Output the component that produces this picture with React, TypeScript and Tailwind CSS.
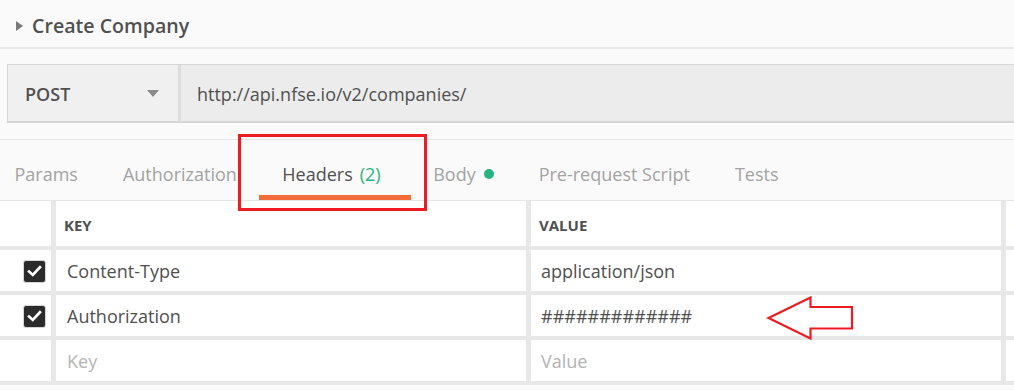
const tabs = [
  { key: "params", label: "Params" },
  { key: "auth", label: "Authorization" },
  { key: "headers", label: "Headers", count: 2 },
  { key: "body", label: "Body", dot: true },
  { key: "pre", label: "Pre-request Script" },
  { key: "tests", label: "Tests" },
];

const rows = [
  { key: "Content-Type", value: "application/json", checked: true },
  { key: "Authorization", value: "#############", checked: true },
  { key: "Key", value: "Value", placeholder: true },
];

function Checkbox() {
  return (
    <div className="flex h-[23px] w-[23px] items-center justify-center rounded-[3px] border border-[#d6d6d6] bg-[#2b2b2b]">
      <svg width="15" height="12" viewBox="0 0 15 12" fill="none">
        <path
          d="M2 6.5 L5.8 10 L13 2.2"
          stroke="white"
          strokeWidth="2.6"
          strokeLinecap="square"
        />
      </svg>
    </div>
  );
}

export default function App() {
  return (
    <div
      className="relative h-[390px] w-[1014px] overflow-hidden bg-[#fafafa] text-[#505050]"
      style={{ fontFamily: '"Open Sans", "Liberation Sans", sans-serif' }}
    >
      {/* title */}
      <div className="flex h-[49px] items-center gap-[9px] border-b-2 border-[#e8e8e8] pt-[5px] pl-[16px]">
        <svg width="7" height="10" viewBox="0 0 7 10">
          <path d="M0 0 L7 5 L0 10 Z" fill="#7a7a7a" />
        </svg>
        <span className="text-[19.6px] font-semibold leading-none text-[#505050]">
          Create Company
        </span>
      </div>

      {/* url bar */}
      <div className="mt-[15px] ml-[7px] flex h-[59px] border-t border-b-2 border-l border-[#d6d6d6] bg-[#ececec]">
        <div className="flex w-[173px] items-center justify-between border-r-[3px] border-[#dcdcdc] bg-[#f0f0f0] pt-[3px] pr-[19px] pl-[17px]">
          <span className="text-[18px] font-semibold text-[#505050]">POST</span>
          <svg width="12" height="7" viewBox="0 0 12 7" className="-mt-[3px]">
            <path d="M0 0 L12 0 L6 7 Z" fill="#8a8a8a" />
          </svg>
        </div>
        <div className="flex items-center pt-[3px] pl-[16px] text-[18px] text-[#505050]">
          http://api.nfse.io/v2/companies/
        </div>
      </div>

      {/* tabs */}
      <div className="mt-[16px] flex h-[62px] items-stretch border-t border-b border-[#e6e6e6]">
        <div className="ml-[-8px] flex">
          {tabs.map((t) => {
            const active = t.key === "headers";
            return (
              <div
                key={t.key}
                className={
                  "flex items-center pt-[13px] text-[18px] " +
                  (active
                    ? "border-b-[5px] border-[#f26b3a] pr-[30px] pl-[23px] text-[#505050]"
                    : "px-[22.5px] pb-[5px] text-[#a3a3a3]")
                }
              >
                <span>{t.label}</span>
                {t.count !== undefined && (
                  <span className="ml-[7px] text-[#2bb381]">({t.count})</span>
                )}
                {t.dot && (
                  <span className="ml-[8px] h-[10px] w-[10px] rounded-full bg-[#26b47f]" />
                )}
              </div>
            );
          })}
        </div>
      </div>

      {/* table */}
      <div className="grid grid-cols-[51px_470px_470px_1fr] gap-x-[5px] gap-y-[4px] bg-[#e8e8e8] pb-[4px]">
        <div className="h-[45px] bg-white" />
        <div className="flex h-[45px] items-center bg-white pt-[3px] pl-[8px] text-[15px] font-bold text-[#505050]">
          KEY
        </div>
        <div className="flex h-[45px] items-center bg-white pt-[3px] pl-[8px] text-[15px] font-bold text-[#505050]">
          VALUE
        </div>
        <div className="flex h-[45px] items-center bg-white pt-[3px] pl-[7px] text-[15px] font-bold whitespace-nowrap text-[#bbbbbb]">
          DESC
        </div>
        {rows.map((r) => (
          <div key={r.key} className="contents">
            <div className="flex h-[41px] items-center justify-end bg-white pt-[1px] pr-[5px]">
              {r.checked && <Checkbox />}
            </div>
            <div
              className={
                "flex h-[41px] items-center bg-white pt-[2px] pl-[11px] text-[18px] " +
                (r.placeholder ? "text-[#b3b3b3]" : "text-[#505050]")
              }
            >
              {r.key}
            </div>
            <div
              className={
                "flex h-[41px] items-center bg-white pt-[2px] pl-[10px] text-[18px] " +
                (r.placeholder ? "text-[#b3b3b3]" : "text-[#505050]")
              }
            >
              {r.value}
            </div>
            <div className="h-[41px] bg-white" />
          </div>
        ))}
      </div>

      {/* annotations */}
      <div className="pointer-events-none absolute top-[134px] left-[238px] h-[77px] w-[189px] border-[3px] border-[#ed1c24]" />
      <svg
        className="pointer-events-none absolute top-[294px] left-[765px]"
        width="92"
        height="48"
        viewBox="765 294 92 48"
      >
        <path
          d="M768.5 318 L810.5 297.5 L810.5 307 L852 307 L852 328.5 L810.5 328.5 L810.5 338.5 Z"
          fill="none"
          stroke="#ed1c24"
          strokeWidth="2.2"
        />
      </svg>
    </div>
  );
}
